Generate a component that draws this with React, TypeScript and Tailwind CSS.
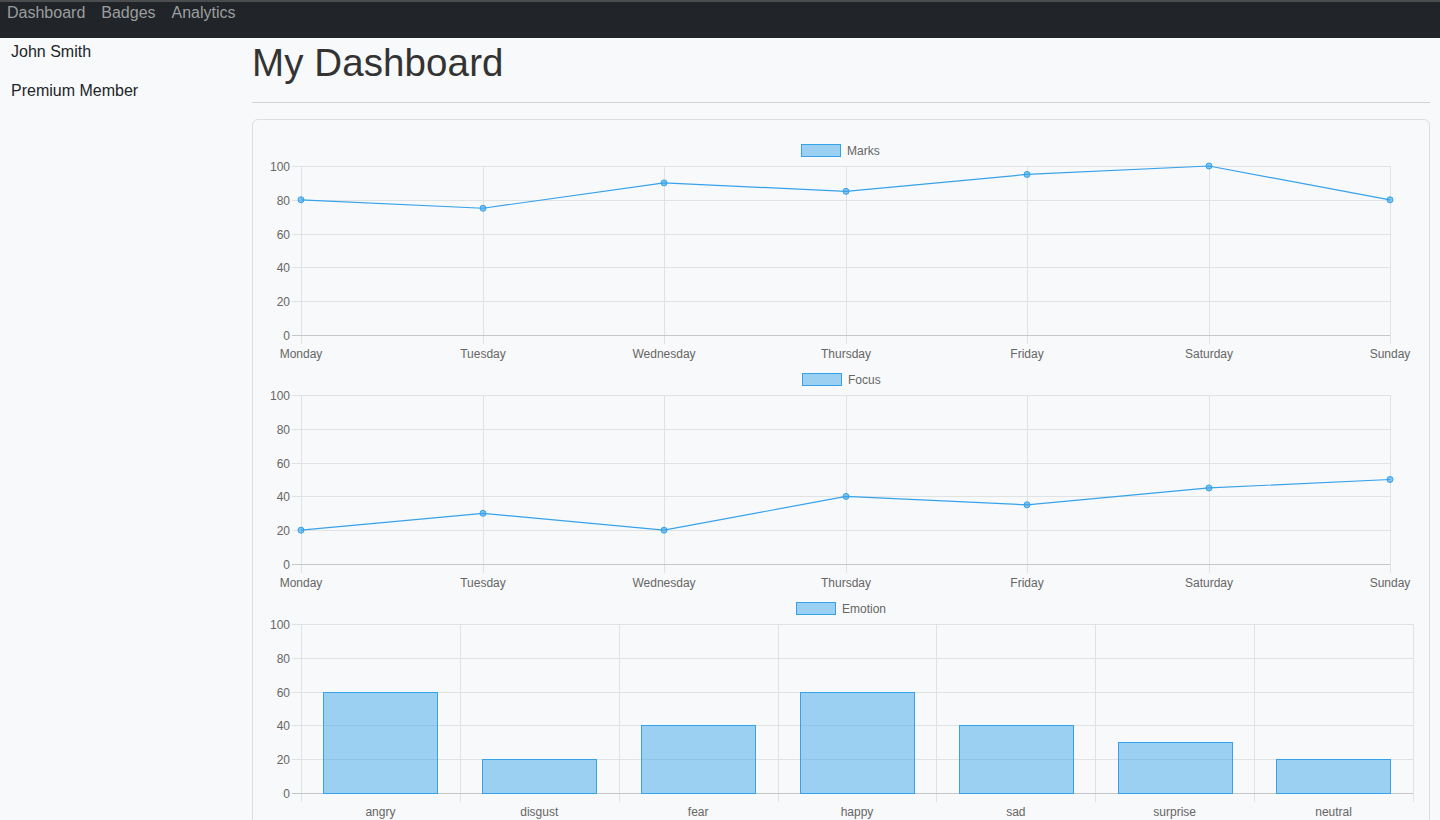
import React from "react";

const FONT = "'Liberation Sans', Arial, Helvetica, sans-serif";
const GRID = "#e1e2e3";
const ZERO = "#c6c7c8";
const LABEL = "#666666";
const BLUE = "#36a2eb";
const BLUE_FILL = "rgba(54,162,235,0.48)";

const W = 1176;
const H = 229;
const TOP = 30;
const BOTTOM = 199;
const yOf = (v: number) => TOP + ((100 - v) / 100) * (BOTTOM - TOP);
const TICKS = [100, 80, 60, 40, 20, 0];

function Legend({ label, boxX }: { label: string; boxX: number }) {
  return (
    <g>
      <rect x={boxX + 0.5} y={8.5} width={39} height={12} fill={BLUE_FILL} stroke={BLUE} strokeWidth={1} />
      <text x={boxX + 46} y={18.5} fontSize={12} fill={LABEL} fontFamily={FONT}>
        {label}
      </text>
    </g>
  );
}

function YAxis({ left, right }: { left: number; right: number }) {
  return (
    <g>
      {TICKS.map((t) => (
        <g key={t}>
          <line
            x1={left - 9}
            x2={right}
            y1={Math.round(yOf(t)) + 0.5}
            y2={Math.round(yOf(t)) + 0.5}
            stroke={t === 0 ? ZERO : GRID}
            strokeWidth={1}
          />
          <text
            x={left - 11}
            y={Math.round(yOf(t)) + 4.5}
            fontSize={12}
            fill={LABEL}
            textAnchor="end"
            fontFamily={FONT}
          >
            {t}
          </text>
        </g>
      ))}
    </g>
  );
}

function LineChart({ label, boxX, data }: { label: string; boxX: number; data: number[] }) {
  const days = ["Monday", "Tuesday", "Wednesday", "Thursday", "Friday", "Saturday", "Sunday"];
  const left = 48;
  const right = 1137;
  const step = (right - left) / 6;
  const xs = days.map((_, i) => Math.round(left + i * step));
  const pts = data.map((v, i) => `${xs[i]},${yOf(v)}`).join(" ");
  return (
    <svg width={W} height={H} className="block">
      <Legend label={label} boxX={boxX} />
      {xs.map((x, i) => (
        <line key={i} x1={x + 0.5} x2={x + 0.5} y1={TOP} y2={BOTTOM + 9} stroke={GRID} strokeWidth={1} />
      ))}
      <YAxis left={left} right={right} />
      {xs.map((x, i) => (
        <text key={days[i]} x={x} y={222} fontSize={12} fill={LABEL} textAnchor="middle" fontFamily={FONT}>
          {days[i]}
        </text>
      ))}
      <polyline points={pts} fill="none" stroke={BLUE} strokeWidth={1.2} />
      {data.map((v, i) => (
        <circle key={i} cx={xs[i]} cy={yOf(v)} r={3} fill="rgba(54,162,235,0.6)" stroke={BLUE} strokeWidth={1} />
      ))}
    </svg>
  );
}

function BarChart({ label, boxX, data, cats }: { label: string; boxX: number; data: number[]; cats: string[] }) {
  const left = 48;
  const right = 1160;
  const cat = (right - left) / cats.length;
  const bw = cat * 0.72;
  const bounds = Array.from({ length: cats.length + 1 }, (_, i) => Math.round(left + i * cat));
  return (
    <svg width={W} height={H} className="block">
      <Legend label={label} boxX={boxX} />
      {bounds.map((x, i) => (
        <line key={i} x1={x + 0.5} x2={x + 0.5} y1={TOP} y2={BOTTOM + 9} stroke={GRID} strokeWidth={1} />
      ))}
      <YAxis left={left} right={right} />
      {data.map((v, i) => {
        const cx = left + (i + 0.5) * cat;
        const x = Math.round(cx - bw / 2);
        const y = Math.round(yOf(v));
        return (
          <rect
            key={i}
            x={x + 0.5}
            y={y + 0.5}
            width={Math.round(bw)}
            height={BOTTOM - y}
            fill={BLUE_FILL}
            stroke={BLUE}
            strokeWidth={1}
          />
        );
      })}
      {cats.map((c, i) => (
        <text
          key={c}
          x={left + (i + 0.5) * cat}
          y={222}
          fontSize={12}
          fill={LABEL}
          textAnchor="middle"
          fontFamily={FONT}
        >
          {c}
        </text>
      ))}
    </svg>
  );
}

export default function App() {
  return (
    <div
      className="h-[820px] w-[1440px] overflow-hidden bg-[#f8f9fa] text-[#212529]"
      style={{ fontFamily: FONT }}
    >
      <nav className="h-[38px] border-t-2 border-[#4b4c4e] bg-[#212529] flex items-start gap-4 px-[7px] pt-[1px]">
        <a className="text-[16px] leading-[20px] text-[#9b9d9f]">Dashboard</a>
        <a className="text-[16px] leading-[20px] text-[#9b9d9f]">Badges</a>
        <a className="text-[16px] leading-[20px] text-[#9b9d9f]">Analytics</a>
      </nav>
      <div className="flex">
        <aside className="w-[252px] shrink-0 pl-[11px] pt-[2px]">
          <p className="text-[16px] leading-6 mb-[15px]">John Smith</p>
          <p className="text-[16px] leading-6">Premium Member</p>
        </aside>
        <main className="flex-1 pr-[10px] pt-[2px]">
          <h1 className="text-[38.5px] leading-[45px] font-medium text-[#333] tracking-[0.1px]">My Dashboard</h1>
          <hr className="mt-[17px] mb-[16px] border-0 border-t border-[#d3d4d5]" />
          <div className="rounded-[6px] border border-[#dcdddf] bg-[#f8f9fa] pt-[16px] pb-5">
            <LineChart label="Marks" boxX={548} data={[80, 75, 90, 85, 95, 100, 80]} />
            <LineChart label="Focus" boxX={549} data={[20, 30, 20, 40, 35, 45, 50]} />
            <BarChart
              label="Emotion"
              boxX={543}
              data={[60, 20, 40, 60, 40, 30, 20]}
              cats={["angry", "disgust", "fear", "happy", "sad", "surprise", "neutral"]}
            />
          </div>
        </main>
      </div>
    </div>
  );
}
